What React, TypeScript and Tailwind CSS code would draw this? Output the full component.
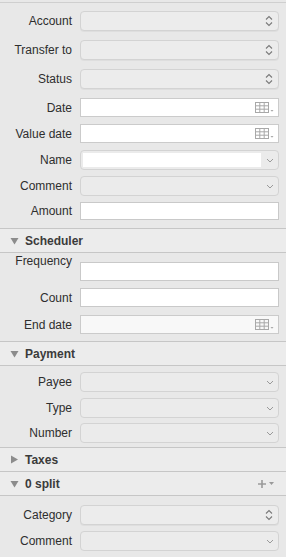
import type { ReactNode } from "react";

const font = { fontFamily: '"Liberation Sans", Arial, sans-serif' };

function UpDown() {
  return (
    <svg width="8" height="12" viewBox="0 0 8 12" className="shrink-0">
      <path d="M1 4.5 L4 1.5 L7 4.5" fill="none" stroke="#7a7a7a" strokeWidth="1.1" />
      <path d="M1 7.5 L4 10.5 L7 7.5" fill="none" stroke="#7a7a7a" strokeWidth="1.1" />
    </svg>
  );
}

function ChevronDown({ color = "#9a9a9a" }: { color?: string }) {
  return (
    <svg width="8" height="5" viewBox="0 0 8 5">
      <path d="M1 1 L4 4 L7 1" fill="none" stroke={color} strokeWidth="1" />
    </svg>
  );
}

function CalendarIcon() {
  return (
    <svg width="20" height="11" viewBox="0 0 20 11" className="shrink-0">
      <rect x="0.5" y="0.5" width="13" height="10" fill="none" stroke="#a8a8a8" />
      <path d="M0.5 3.8 H13.5 M0.5 7.2 H13.5 M4.8 0.5 V10.5 M9.2 0.5 V10.5" stroke="#a8a8a8" />
      <path d="M15.5 8 L18.5 8 L17 9.8 Z" fill="#a8a8a8" />
    </svg>
  );
}

function Popup() {
  return (
    <div className="flex h-full items-center justify-end rounded-[4px] border border-[#d3d3d3] bg-[#ececec] pr-[5px] shadow-[0_1px_0_rgba(0,0,0,0.04)]">
      <UpDown />
    </div>
  );
}

function TextField({ bg = "bg-white" }: { bg?: string }) {
  return <div className={`h-full border border-[#c9c9c9] ${bg}`} />;
}

function DateField({ bg = "bg-white" }: { bg?: string }) {
  return (
    <div className={`flex h-full items-center justify-end border border-[#cbcbcb] pr-[3px] ${bg}`}>
      <CalendarIcon />
    </div>
  );
}

function Combo({ editable = false }: { editable?: boolean }) {
  return (
    <div className="flex h-full rounded-[4px] border border-[#d3d3d3] bg-[#ebebeb]">
      <div className={`flex-1 ${editable ? "my-[2px] ml-[2px] bg-white" : ""}`} />
      <div className="flex w-[17px] items-center justify-center">
        <ChevronDown />
      </div>
    </div>
  );
}

type RowProps = {
  label: string;
  mt: string;
  h: string;
  children: ReactNode;
  topLabel?: boolean;
};

function Row({ label, mt, h, children, topLabel }: RowProps) {
  return (
    <div className={`flex ${mt} ${h}`}>
      <div
        className={`w-[72px] shrink-0 text-right text-[12px] leading-[14px] text-[#2e2e2e] ${
          topLabel ? "-mt-[8px]" : "self-center"
        }`}
      >
        {label}
      </div>
      <div className="ml-[8px] mr-[7px] flex-1">{children}</div>
    </div>
  );
}

function Header({ title, open = true, action }: { title: string; open?: boolean; action?: boolean }) {
  return (
    <div className="flex h-[24px] items-center border-b border-[#c6c6c6] bg-[#ececec] pl-[10px] pr-[12px]">
      {open ? (
        <svg width="9" height="8" viewBox="0 0 9 8" className="shrink-0">
          <path d="M0.5 1 L8.5 1 L4.5 7.5 Z" fill="#8c8c8c" />
        </svg>
      ) : (
        <svg width="9" height="9" viewBox="0 0 9 9" className="shrink-0">
          <path d="M1 0.5 L8 4.5 L1 8.5 Z" fill="#8c8c8c" />
        </svg>
      )}
      <span className="ml-[6px] text-[12px] font-bold text-[#3b3b3b]">{title}</span>
      {action && (
        <div className="ml-auto flex items-center gap-[3px]">
          <svg width="8" height="8" viewBox="0 0 8 8">
            <path d="M4 0 V8 M0 4 H8" stroke="#9a9a9a" strokeWidth="1.6" />
          </svg>
          <svg width="5" height="3" viewBox="0 0 5 3">
            <path d="M0 0 H5 L2.5 3 Z" fill="#9a9a9a" />
          </svg>
        </div>
      )}
    </div>
  );
}

export default function App() {
  return (
    <main className="h-[557px] w-[286px] overflow-hidden bg-[#e8e8e8]" style={font}>
      <div className="h-[2px]" />
      <div className="border-t border-[#cfcfcf] pb-[8px]">
        <Row label="Account" mt="mt-[8px]" h="h-[20px]">
          <Popup />
        </Row>
        <Row label="Transfer to" mt="mt-[9px]" h="h-[20px]">
          <Popup />
        </Row>
        <Row label="Status" mt="mt-[9px]" h="h-[20px]">
          <Popup />
        </Row>
        <Row label="Date" mt="mt-[9px]" h="h-[19px]">
          <DateField />
        </Row>
        <Row label="Value date" mt="mt-[7px]" h="h-[19px]">
          <DateField />
        </Row>
        <Row label="Name" mt="mt-[7px]" h="h-[20px]">
          <Combo editable />
        </Row>
        <Row label="Comment" mt="mt-[6px]" h="h-[20px]">
          <Combo />
        </Row>
        <Row label="Amount" mt="mt-[6px]" h="h-[18px]">
          <TextField />
        </Row>
      </div>

      <div className="border-t border-[#c6c6c6]">
        <Header title="Scheduler" />
        <div className="pb-[7px]">
          <Row label="Frequency" mt="mt-[9px]" h="h-[19px]" topLabel>
            <TextField />
          </Row>
          <Row label="Count" mt="mt-[7px]" h="h-[19px]">
            <TextField />
          </Row>
          <Row label="End date" mt="mt-[8px]" h="h-[19px]">
            <DateField bg="bg-[#f8f8f8]" />
          </Row>
        </div>
      </div>

      <div className="border-t border-[#c6c6c6]">
        <Header title="Payment" />
        <div className="pb-[4px]">
          <Row label="Payee" mt="mt-[6px]" h="h-[20px]">
            <Combo />
          </Row>
          <Row label="Type" mt="mt-[6px]" h="h-[20px]">
            <Combo />
          </Row>
          <Row label="Number" mt="mt-[5px]" h="h-[20px]">
            <Combo />
          </Row>
        </div>
      </div>

      <div className="border-t border-[#c6c6c6]">
        <Header title="Taxes" open={false} />
      </div>

      <div>
        <Header title="0 split" action />
        <Row label="Category" mt="mt-[9px]" h="h-[20px]">
          <Popup />
        </Row>
        <Row label="Comment" mt="mt-[6px]" h="h-[20px]">
          <Combo />
        </Row>
      </div>
    </main>
  );
}
